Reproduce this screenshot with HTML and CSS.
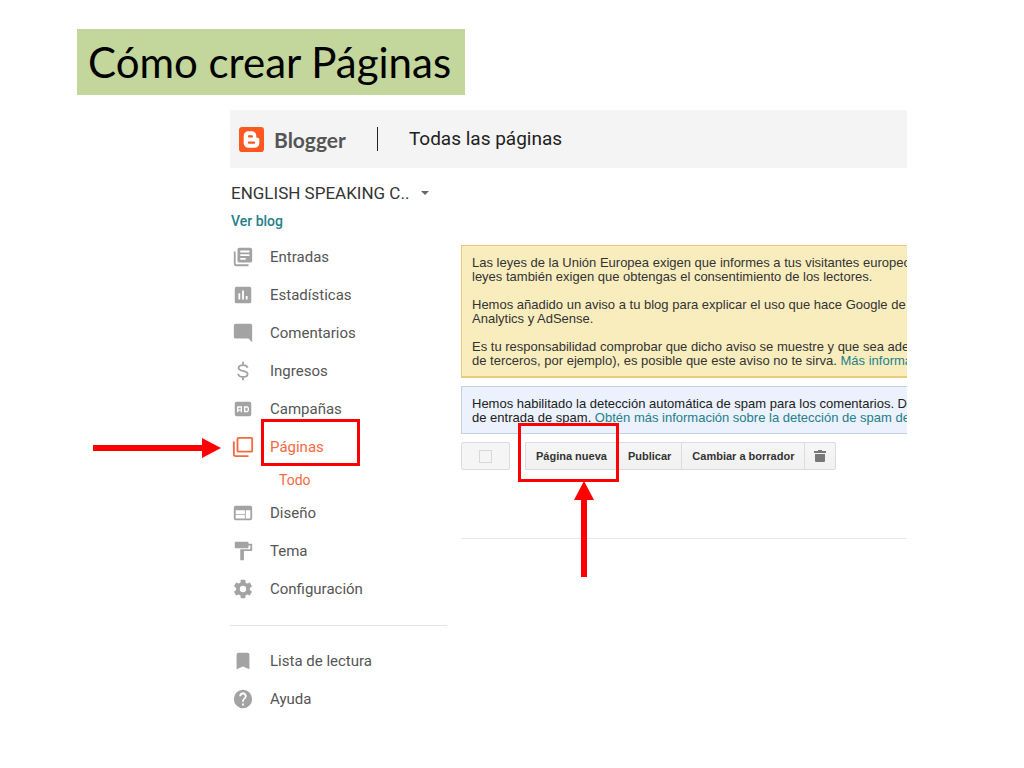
FILE: index.html
```html
<!DOCTYPE html>
<html lang="es">
<head>
    <meta charset="UTF-8">
    <meta name="viewport" content="width=device-width, initial-scale=1.0">
    <title>Cómo crear Páginas</title>
    <link rel="stylesheet" href="styles.css">
</head>
<body>
    <h1 class="title">Cómo crear Páginas</h1>

    <div class="blogger">
        <header class="header">
            <svg class="logo" viewBox="0 0 24 24">
                <rect width="24" height="24" rx="3" fill="#ff5722"/>
                <path d="M9 4h3.500a4 4 0 0 1 4 4v1c0 .8.500 1.200 1.200 1.200.9 0 1.800.500 1.800 1.500V15.500a4.500 4.500 0 0 1-4.500 4.500H9a4.500 4.500 0 0 1-4.500-4.500v-7A4.500 4.500 0 0 1 9 4z" fill="#fff"/>
                <path d="M9.500 9h3M9.500 15h5" stroke="#ff5722" stroke-width="2" stroke-linecap="round"/>
            </svg>
            <span class="brand">Blogger</span>
            <h2 class="section">Todas las páginas</h2>
        </header>

        <div class="content">
            <aside class="sidebar">
                <button class="blog-name">ENGLISH SPEAKING C.. <span class="caret"></span></button>
                <a class="view-blog" href="#">Ver blog</a>

                <nav>
                    <ul class="menu">
                        <li><a href="#">
                            <svg viewBox="0 0 24 24"><path fill-rule="evenodd" d="M4 6H2v14a2 2 0 0 0 2 2h14v-2H4zM20 2H8a2 2 0 0 0-2 2v12a2 2 0 0 0 2 2h12a2 2 0 0 0 2-2V4a2 2 0 0 0-2-2zM9 5h10v2H9zM9 9h10v2H9zM9 13h6v2H9z"/></svg>
                            Entradas</a></li>
                        <li><a href="#">
                            <svg viewBox="0 0 24 24"><path d="M19 3H5a2 2 0 0 0-2 2v14a2 2 0 0 0 2 2h14a2 2 0 0 0 2-2V5a2 2 0 0 0-2-2zM9 17H7v-7h2zm4 0h-2V7h2zm4 0h-2v-4h2z"/></svg>
                            Estadísticas</a></li>
                        <li><a href="#">
                            <svg viewBox="0 0 24 24"><path d="M22 4a2 2 0 0 0-2-2H4a2 2 0 0 0-2 2v12a2 2 0 0 0 2 2h14l4 4z"/></svg>
                            Comentarios</a></li>
                        <li><a href="#">
                            <svg viewBox="0 0 24 24"><path d="M12 2v4M12 18v4M17 8.500C16.500 6.500 14.500 5.500 12 5.500c-3 0-4.800 1.300-4.800 3.200 0 4.300 9.800 2.200 9.800 6.600 0 2-2 3.200-5 3.200s-5-1.200-5.300-3.500" fill="none" stroke="#a3a3a3" stroke-width="2"/></svg>
                            Ingresos</a></li>
                        <li><a href="#">
                            <svg viewBox="0 0 24 24"><path fill-rule="evenodd" d="M19 4H5a2 2 0 0 0-2 2v12a2 2 0 0 0 2 2h14a2 2 0 0 0 2-2V6a2 2 0 0 0-2-2zM5.500 9h5.500v6.500H9.500V14H7v1.500H5.500zM7 10.500v2h2.500v-2zM13 9h4l1.500 1.500V14L17 15.500h-4zM14.500 10.500V14H17v-3.500z"/></svg>
                            Campañas</a></li>
                        <li class="active">
                            <a href="#">
                                <svg viewBox="0 0 24 24"><path d="M7 2h14a1 1 0 0 1 1 1v13a1 1 0 0 1-1 1H7a1 1 0 0 1-1-1V3a1 1 0 0 1 1-1zM2 6v14a2 2 0 0 0 2 2h14" fill="none" stroke="#f4693f" stroke-width="2"/></svg>
                                Páginas</a>
                            <span class="mark mark-menu"></span>
                            <svg class="arrow arrow-right" viewBox="0 0 128 20"><path d="M0 7h109V0l19 10-19 10v-7H0z"/></svg>
                        </li>
                        <li class="sub"><a href="#">Todo</a></li>
                        <li><a href="#">
                            <svg viewBox="0 0 24 24"><path d="M20 4H4a2 2 0 0 0-2 2v12a2 2 0 0 0 2 2h16a2 2 0 0 0 2-2V6a2 2 0 0 0-2-2zm-6 14H4v-4h10zm0-5H4V9h10zm6 5h-5V9h5z"/></svg>
                            Diseño</a></li>
                        <li><a href="#">
                            <svg viewBox="0 0 24 24"><path d="M18 4V3a1 1 0 0 0-1-1H4a1 1 0 0 0-1 1v5a1 1 0 0 0 1 1h13a1 1 0 0 0 1-1V6h2v4H9v12h4V12h9V4z"/></svg>
                            Tema</a></li>
                        <li><a href="#">
                            <svg viewBox="0 0 24 24"><path d="M19.430 12.980c.04-.32.070-.64.070-.98s-.03-.66-.07-.98l2.110-1.650c.19-.15.240-.42.120-.64l-2-3.460c-.12-.22-.39-.3-.61-.22l-2.490 1c-.52-.4-1.080-.73-1.690-.98l-.38-2.650A.488.488 0 0 0 14 2h-4c-.25 0-.46.180-.49.420l-.38 2.650c-.61.250-1.170.590-1.690.980l-2.490-1c-.23-.09-.49 0-.61.220l-2 3.460c-.13.220-.07.490.120.640l2.110 1.650c-.04.320-.07.650-.07.980s.03.660.070.980l-2.110 1.650c-.19.150-.24.420-.12.640l2 3.460c.12.220.390.300.610.220l2.490-1c.52.400 1.080.730 1.690.980l.38 2.650c.03.240.240.420.490.420h4c.25 0 .46-.18.490-.42l.38-2.650c.61-.25 1.170-.59 1.690-.98l2.490 1c.23.090.490 0 .61-.22l2-3.460c.12-.22.070-.49-.12-.64zM12 15.500a3.500 3.500 0 1 1 0-7 3.500 3.500 0 0 1 0 7z"/></svg>
                            Configuración</a></li>
                    </ul>
                    <ul class="menu menu-bottom">
                        <li><a href="#">
                            <svg viewBox="0 0 24 24"><path d="M17 3H7a2 2 0 0 0-2 2v16l7-3 7 3V5a2 2 0 0 0-2-2z"/></svg>
                            Lista de lectura</a></li>
                        <li><a href="#">
                            <svg viewBox="0 0 24 24"><path d="M12 2a10 10 0 1 0 0 20 10 10 0 0 0 0-20zm1 17h-2v-2h2zm2.070-7.750l-.9.920C13.450 12.900 13 13.500 13 15h-2v-.5c0-1.100.450-2.100 1.170-2.830l1.240-1.260A2 2 0 1 0 10 9H8a4 4 0 1 1 7.070 2.250z"/></svg>
                            Ayuda</a></li>
                    </ul>
                </nav>
            </aside>

            <main class="main">
                <div class="notice notice-warning">
                    <p>Las leyes de la Unión Europea exigen que informes a tus visitantes europeos<br>
                    leyes también exigen que obtengas el consentimiento de los lectores.</p>
                    <p>Hemos añadido un aviso a tu blog para explicar el uso que hace Google de<br>
                    Analytics y AdSense.</p>
                    <p>Es tu responsabilidad comprobar que dicho aviso se muestre y que sea adecuado<br>
                    de terceros, por ejemplo), es posible que este aviso no te sirva. <a href="#">Más información</a></p>
                </div>
                <div class="notice notice-info">
                    <p>Hemos habilitado la detección automática de spam para los comentarios. De<br>
                    de entrada de spam. <a href="#">Obtén más información sobre la detección de spam de</a></p>
                </div>

                <div class="toolbar">
                    <label class="select-all"><input type="checkbox" aria-label="Seleccionar todo"></label>
                    <div class="buttons">
                        <div class="new-page">
                            <button>Página nueva</button>
                            <span class="mark mark-button"></span>
                            <svg class="arrow arrow-up" viewBox="0 0 20 96"><path d="M10 0l10 19h-7v77H7V19H0z"/></svg>
                        </div>
                        <button>Publicar</button>
                        <button>Cambiar a borrador</button>
                        <button class="delete" aria-label="Eliminar">
                            <svg class="trash" viewBox="0 0 12 14"><path d="M4 1h4v1h4v2H0V2h4zM1 5h10v7a1 1 0 0 1-1 1H2a1 1 0 0 1-1-1z" fill="#777"/></svg>
                        </button>
                    </div>
                </div>
                <hr class="line">
            </main>
        </div>
    </div>
</body>
</html>
```
FILE: styles.css
```css
* {
    box-sizing: border-box;
}

body {
    margin: 0;
    padding: 29px 117px 40px 77px;
    background: #fff;
    font-family: Roboto, sans-serif;
    color: #212121;
}

h1, h2, p, ul {
    margin: 0;
    padding: 0;
    font-weight: normal;
}

a {
    color: #24808a;
    text-decoration: none;
}

button {
    font-family: inherit;
    color: inherit;
    cursor: pointer;
}

.title {
    width: fit-content;
    padding: 0 14px 0 11px;
    background: #c3d69b;
    color: #000;
    font-family: Lato, sans-serif;
    font-size: 42px;
    line-height: 66px;
}

.blogger {
    margin: 15px 0 0 153px;
}

.header {
    display: flex;
    align-items: center;
    height: 58px;
    padding-left: 9px;
    background: #f4f4f4;
}

.logo {
    width: 25px;
    height: 25px;
    margin-right: 10px;
}

.brand {
    color: #555;
    font-family: Lato, sans-serif;
    font-size: 21px;
    font-weight: bold;
}

.section {
    margin-left: 31px;
    padding-left: 31px;
    border-left: 1px solid #222;
    font-size: 19px;
    line-height: 24px;
}

.content {
    display: grid;
    grid-template-columns: 217px minmax(0, 1fr);
    gap: 14px;
}

.sidebar {
    padding-top: 14px;
}

.blog-name {
    display: flex;
    align-items: center;
    gap: 12px;
    padding: 0 1px;
    border: 0;
    background: none;
    color: #333;
    font-size: 17px;
    line-height: 22px;
}

.caret {
    border: 4px solid transparent;
    border-top-color: #666;
    border-bottom: 0;
}

.view-blog {
    display: block;
    padding: 8px 1px;
    font-size: 14px;
    font-weight: 500;
    line-height: 18px;
}

.menu {
    list-style: none;
}

.menu li {
    position: relative;
}

.menu a {
    display: flex;
    align-items: center;
    gap: 16px;
    height: 38px;
    padding-left: 2px;
    color: #555;
    font-size: 15px;
}

.menu a svg {
    width: 22px;
    height: 22px;
    fill: #a3a3a3;
}

.menu .active a,
.menu .sub a {
    color: #f4693f;
}

.menu .sub a {
    height: 28px;
    padding-left: 49px;
    font-size: 14px;
}

.menu-bottom {
    margin-top: 17px;
    padding-top: 16px;
    border-top: 1px solid #e4e4e4;
}

.main {
    overflow: hidden;
    padding-top: 77px;
}

.notice {
    margin-bottom: 8px;
    padding: 10px 10px 8px;
    border: 1px solid;
    border-right: 0;
    overflow: hidden;
    font-family: "Liberation Sans", Arial, sans-serif;
    font-size: 13px;
    line-height: 14px;
    white-space: nowrap;
}

.notice p + p {
    margin-top: 14px;
}

.notice-warning {
    border-color: #ecca7c;
    border-bottom-width: 2px;
    background: #f9edbe;
    color: #333;
}

.notice-info {
    background: #ebf1fd;
    border-color: #c3d0e8;
}

.toolbar {
    display: flex;
    gap: 15px;
    height: 28px;
}

.select-all {
    display: flex;
    align-items: center;
    justify-content: center;
    width: 49px;
    border: 1px solid #dcdcdc;
    border-radius: 2px;
    background: #f5f5f5;
}

.select-all input {
    appearance: none;
    width: 13px;
    height: 13px;
    margin: 0;
    border: 1px solid #d8d8d8;
}

.buttons {
    display: flex;
}

.buttons button {
    height: 28px;
    margin-right: -1px;
    padding: 0 10px;
    border: 1px solid #dcdcdc;
    background: linear-gradient(#f6f6f6, #f1f1f1);
    color: #333;
    font-family: "Liberation Sans", Arial, sans-serif;
    font-size: 11px;
    font-weight: bold;
    white-space: nowrap;
}

.buttons .delete {
    padding: 0 9px;
    border-radius: 0 2px 2px 0;
}

.new-page {
    position: relative;
}

.trash {
    display: block;
    width: 12px;
    height: 14px;
}

.line {
    margin: 68px 0 0;
    border: 0;
    border-top: 1px solid #e8e8e8;
}

/* Red marks and arrows over the page */
.mark {
    position: absolute;
    border: 3px solid #f00;
}

.mark-menu {
    top: -9px;
    left: 31px;
    width: 99px;
    height: 47px;
}

.mark-button {
    top: -19px;
    left: -7px;
    width: 101px;
    height: 59px;
}

.arrow {
    position: absolute;
    fill: #f00;
}

.arrow-right {
    top: 10px;
    left: -137px;
    width: 128px;
    height: 20px;
}

.arrow-up {
    top: 39px;
    left: 49px;
    width: 20px;
    height: 96px;
}
```
